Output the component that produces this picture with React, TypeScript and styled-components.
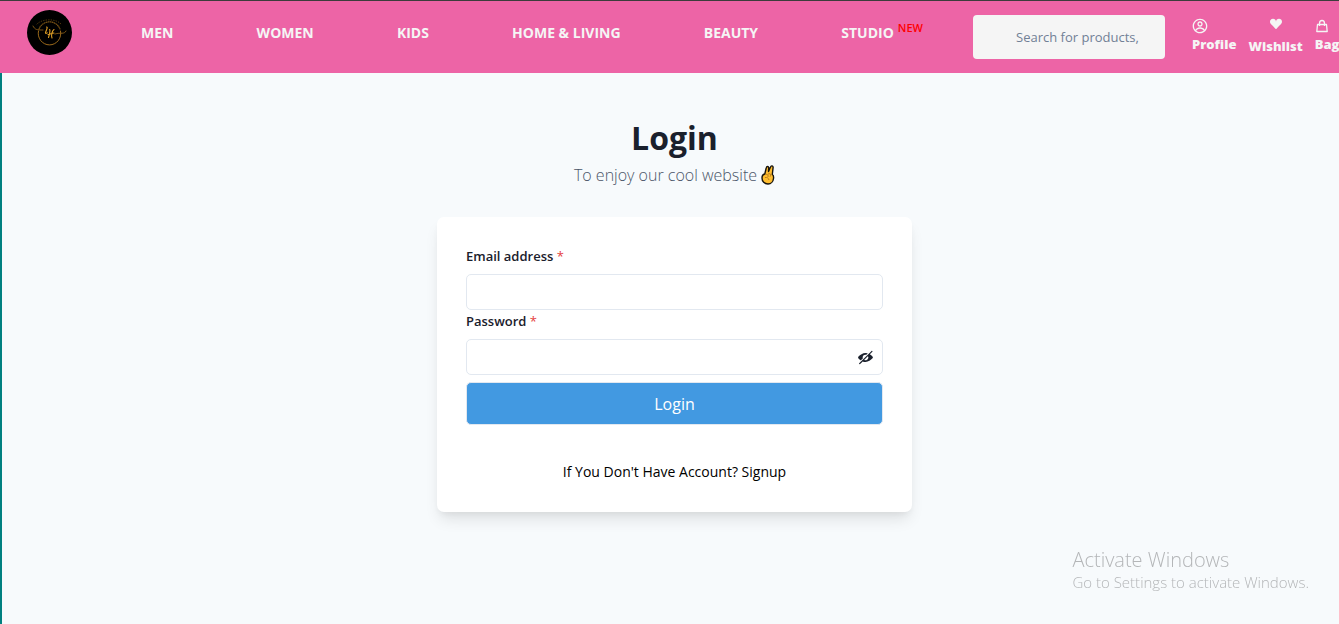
import React, { useState } from "react";
import styled, { createGlobalStyle } from "styled-components";
import { CgProfile } from "react-icons/cg";
import { BsSuitHeartFill } from "react-icons/bs";

const GlobalStyle = createGlobalStyle`
  *, *::before, *::after { box-sizing: border-box; }
  body {
    margin: 0;
    background: #f7fafc;
    color: #1a202c;
    font-family: "Open Sans", "Noto Sans", sans-serif;
    font-size: 16px;
    line-height: 24px;
    overflow-x: hidden;
  }
  button, input { font: inherit; color: inherit; }
  a { color: inherit; text-decoration: none; }
`;

const Page = styled.div`
  min-height: 100vh;
  display: flex;
  flex-direction: column;
`;

const Header = styled.header`
  display: flex;
  align-items: flex-start;
  height: 73px;
  padding-left: 27px;
  border-top: 1px solid #3c3c3c;
  background: #ed64a6;
  color: #f5f5f5;
  overflow: hidden;
`;

const LogoLink = styled.a`
  flex: none;
  height: 45px;
  margin-top: 9px;
`;

const Nav = styled.nav`
  flex: 1;
  display: flex;
  justify-content: space-between;
  margin: 20px 50px 0 69px;
  font-size: 14px;
  font-weight: 700;
`;

const NavLink = styled.a`
  display: flex;
  gap: 4px;
  white-space: nowrap;
`;

const NewTag = styled.span`
  color: #ff0000;
  font-size: 11px;
  font-weight: 600;
  line-height: 14px;
`;

const SearchInput = styled.input`
  flex: none;
  width: 192px;
  height: 44px;
  margin-top: 14px;
  padding: 0 20px 0 43px;
  border: 0;
  border-radius: 4px;
  background: #f5f5f5;
  font-size: 13px;
  &::placeholder { color: #718096; opacity: 1; }
`;

const Actions = styled.div`
  flex: none;
  display: flex;
  gap: 12px;
  width: 147px;
  margin: 17px 0 0 27px;
`;

const Action = styled.a<{ $center?: boolean }>`
  flex: none;
  display: flex;
  flex-direction: column;
  align-items: ${(p) => (p.$center ? "center" : "flex-start")};
  gap: ${(p) => (p.$center ? 6 : 0)}px;
  font-size: 13px;
  font-weight: 800;
  line-height: 20px;
  svg { display: block; }
`;

const Main = styled.main`
  flex: 1;
  display: flex;
  flex-direction: column;
  align-items: center;
  padding: 43px 0 48px 8px;
  border-left: 2px solid #008080;
`;

const Title = styled.h1`
  margin: 0;
  font-size: 32px;
  font-weight: 700;
  line-height: 44px;
`;

const Subtitle = styled.p`
  display: flex;
  align-items: center;
  gap: 4px;
  margin: 3px 0 30px;
  color: #4a5568;
  font-size: 16px;
  font-weight: 340;
`;

const Card = styled.form`
  display: flex;
  flex-direction: column;
  width: 475px;
  max-width: 100%;
  padding: 29px 29px 28px;
  border-radius: 7px;
  background: #ffffff;
  box-shadow: 0 10px 15px -3px rgba(0, 0, 0, 0.1), 0 4px 6px -2px rgba(0, 0, 0, 0.05);
`;

const Label = styled.label`
  margin-bottom: 7px;
  font-size: 13px;
  font-weight: 600;
  line-height: 21px;
`;

const Required = styled.span`
  color: #e53e3e;
  font-weight: 400;
`;

const Field = styled.div`
  position: relative;
  display: flex;
  height: 36px;
  margin-bottom: 1px;
`;

const TextInput = styled.input`
  flex: 1;
  min-width: 0;
  padding: 0 14px;
  border: 1px solid #e2e8f0;
  border-radius: 5px;
  background: #ffffff;
`;

const RevealButton = styled.button`
  position: absolute;
  top: 0;
  right: 0;
  display: flex;
  align-items: center;
  justify-content: center;
  width: 35px;
  height: 36px;
  padding: 0;
  border: 0;
  background: transparent;
  cursor: pointer;
`;

const SubmitButton = styled.button`
  height: 43px;
  margin-top: 6px;
  border: 1px solid #e2e8f0;
  border-radius: 5px;
  background: #4299e1;
  color: #ffffff;
  font-size: 16px;
  cursor: pointer;
`;

const Signup = styled.p`
  margin: 35px 0 0;
  color: #000000;
  font-size: 14px;
  font-weight: 380;
  text-align: center;
`;

const Watermark = styled.aside`
  position: fixed;
  right: 30px;
  bottom: 30px;
  color: #b4b6b8;
  font-size: 15px;
  font-weight: 340;
  line-height: 23px;
  pointer-events: none;
`;

const WatermarkTitle = styled.div`
  font-size: 20px;
`;

const Logo = () => (
  <svg width="45" height="45" viewBox="0 0 45 45" role="img" aria-label="LH">
    <circle cx="22.5" cy="22.5" r="22.5" fill="#000" />
    <g fill="none" stroke="#ad761e" strokeLinecap="round">
      <path d="M11.5 21a11.3 11.3 0 1 0 22 0" strokeWidth="0.9" />
      <path d="M12 19a11.3 11.3 0 0 1 21 0" strokeWidth="1.2" strokeDasharray="0.7 1.3" opacity="0.7" />
      <path d="M6 16c2 4 4 4 10 4M39 21c-2 4-5 1-11 3" strokeWidth="0.7" />
      <path d="M10 14c5-5 18-6 24 0" strokeWidth="0.5" strokeDasharray="0.5 2" />
    </g>
    <g fill="none" stroke="#dd9e26" strokeLinecap="round" strokeWidth="1.1">
      <path d="M19.5 17c1.8-.2-.6 4-1 5.700-.2 1 .8.8 1.800.2" />
      <path d="M22.500 19.500c1-.2 0 5-1 8M27 19.500c-2 1-3 6-2 8.500M21 24.500c2 0 4-1.500 6-1.500" />
    </g>
  </svg>
);

const Bag = () => (
  <svg width="14" height="16" viewBox="0 0 14 16" fill="none" stroke="currentColor" strokeWidth="1.3" strokeLinejoin="round" aria-hidden="true">
    <path d="M2.500 6.500h9l.7 7H1.800Z" />
    <path d="M4.500 8V5.500a2.500 3 0 0 1 5 0V8" />
  </svg>
);

const VictoryHand = () => (
  <svg width="14" height="20" viewBox="0 0 14 20" role="img" aria-label="Victory hand">
    <path
      d="M3.800 9 5.200 3c.4-2 2.600-2 2.500 0l-.2 3.500L9.500 2c.6-1.800 2.800-1.300 2.600.6L11.300 9.500c1.400.8 1.500 2 1.200 4C12.200 16.500 10 19 7 19c-3.500 0-6-2.500-6-6 0-2.200 1-3.700 2.800-4Z"
      fill="#ffbd2e"
      stroke="#17130c"
      strokeWidth="1.400"
      strokeLinejoin="round"
    />
    <path d="M4.500 9.500c2-.6 3 .6 2.500 2.500M7 9l2-.3c1 .3 1 2.300 0 3M4 12.500c2-.4 3.700.6 4 2.500" fill="none" stroke="#a86d16" strokeWidth="0.800" />
  </svg>
);

const HiddenEye = () => (
  <svg width="15" height="15" viewBox="0 0 24 24" fill="currentColor" aria-hidden="true">
    <path d="M23.2,10.549a20.954,20.954,0,0,0-4.3-3.6l4-3.995a1,1,0,1,0-1.414-1.414l-.018.018a.737.737,0,0,1-.173.291l-19.5,19.4c-.008.007-.018.009-.026.017a1,1,0,0,0,1.631,1.088l4.146-4.146a11.26,11.26,0,0,0,4.31.939h.3c4.256,0,8.489-2.984,11.051-5.8A2.171,2.171,0,0,0,23.2,10.549ZM16.313,13.27a4.581,4.581,0,0,1-3,3.028,4.3,4.3,0,0,1-3.1-.19.253.253,0,0,1-.068-.407l5.56-5.559a.252.252,0,0,1,.407.067A4.3,4.3,0,0,1,16.313,13.27Z" />
    <path d="M7.615,13.4a.244.244,0,0,0,.061-.24A4.315,4.315,0,0,1,7.5,12,4.5,4.5,0,0,1,12,7.5a4.276,4.276,0,0,1,1.16.173.244.244,0,0,0,.24-.061l1.941-1.942a.254.254,0,0,0-.1-.421A10.413,10.413,0,0,0,12,4.75C7.7,4.692,3.4,7.7.813,10.549a2.15,2.15,0,0,0-.007,2.9,21.209,21.209,0,0,0,3.438,3.03.256.256,0,0,0,.326-.029Z" />
  </svg>
);

const categories = ["MEN", "WOMEN", "KIDS", "HOME & LIVING", "BEAUTY"];

export default function App() {
  const [visible, setVisible] = useState(false);

  return (
    <Page>
      <GlobalStyle />
      <Header>
        <LogoLink href="#home"><Logo /></LogoLink>
        <Nav aria-label="Categories">
          {categories.map((name) => (
            <NavLink href="#category" key={name}>{name}</NavLink>
          ))}
          <NavLink href="#studio">STUDIO<NewTag>NEW</NewTag></NavLink>
        </Nav>
        <SearchInput type="text" aria-label="Search" placeholder="Search for products," />
        <Actions>
          <Action href="#profile"><CgProfile size={16} />Profile</Action>
          <Action href="#wishlist" $center><BsSuitHeartFill size={12} />Wishlist</Action>
          <Action href="#bag"><Bag />Bag</Action>
        </Actions>
      </Header>
      <Main>
        <Title>Login</Title>
        <Subtitle>To enjoy our cool website <VictoryHand /></Subtitle>
        <Card onSubmit={(e) => e.preventDefault()}>
          <Label htmlFor="email">Email address <Required>*</Required></Label>
          <Field><TextInput id="email" type="email" required /></Field>
          <Label htmlFor="password">Password <Required>*</Required></Label>
          <Field>
            <TextInput id="password" type={visible ? "text" : "password"} required />
            <RevealButton type="button" aria-label="Show password" onClick={() => setVisible(!visible)}>
              <HiddenEye />
            </RevealButton>
          </Field>
          <SubmitButton type="submit">Login</SubmitButton>
          <Signup>If You Don't Have Account? <a href="#signup">Signup</a></Signup>
        </Card>
      </Main>
      <Watermark>
        <WatermarkTitle>Activate Windows</WatermarkTitle>
        Go to Settings to activate Windows.
      </Watermark>
    </Page>
  );
}
